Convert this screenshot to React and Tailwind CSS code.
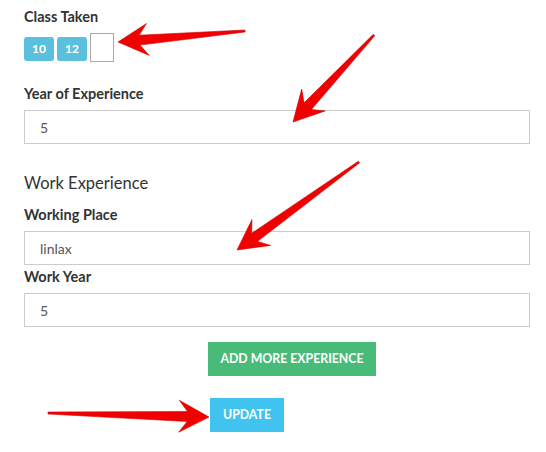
import React from "react";

function arrowPoints(T, P, h = 30, W = 16, w = 5, t = 1) {
  const dx = P[0] - T[0];
  const dy = P[1] - T[1];
  const len = Math.hypot(dx, dy);
  const d = [dx / len, dy / len];
  const n = [-d[1], d[0]];
  const at = (k, m) => [P[0] - d[0] * k + n[0] * m, P[1] - d[1] * k + n[1] * m];
  const pts = [
    [T[0] + n[0] * t, T[1] + n[1] * t],
    at(h * 0.72, w),
    at(h, W),
    P,
    at(h, -W),
    at(h * 0.72, -w),
    [T[0] - n[0] * t, T[1] - n[1] * t],
  ];
  return pts.map((p) => p.map((v) => v.toFixed(1)).join(",")).join(" ");
}

const arrows = [
  { T: [245, 31], P: [118, 42] },
  { T: [374, 35], P: [293, 122] },
  { T: [359, 162], P: [237, 250] },
  { T: [48, 413], P: [209, 417] },
];

function Label({ children, className = "" }) {
  return (
    <div className={`text-[14.5px] leading-[20px] font-bold text-[#333] ${className}`}>
      {children}
    </div>
  );
}

function Input({ value, className = "" }) {
  return (
    <div
      className={`h-[34px] border border-[#cccccc] bg-white flex items-center px-[15px] text-[14px] text-[#555] ${className}`}
    >
      {value}
    </div>
  );
}

export default function App() {
  return (
    <div
      className="relative w-[546px] h-[452px] bg-white overflow-hidden"
      style={{ fontFamily: "Lato, 'Open Sans', sans-serif" }}
    >
      <div className="flex flex-col pl-[24px] pr-[16px] pt-[7px]">
        <Label>Class Taken</Label>
        <div className="flex items-start gap-[3px] mt-[6px]">
          <span className="mt-[4px] w-[30px] h-[24px] rounded-[3px] bg-[#5bc0de] text-white text-[12px] font-bold flex items-center justify-center">
            10
          </span>
          <span className="mt-[4px] w-[30px] h-[24px] rounded-[3px] bg-[#5bc0de] text-white text-[12px] font-bold flex items-center justify-center">
            12
          </span>
          <span className="w-[24px] h-[29px] border border-[#aaaaaa] bg-white" />
        </div>

        <Label className="mt-[22px]">Year of Experience</Label>
        <Input value="5" className="mt-[6px]" />

        <div className="mt-[27px] text-[16.5px] leading-[24px] text-[#333]">Work Experience</div>

        <Label className="mt-[10px]">Working Place</Label>
        <Input value="linlax" className="mt-[6px]" />

        <Label className="mt-[2px]">Work Year</Label>
        <Input value="5" className="mt-[6px]" />

        <div className="mt-[15px] ml-[184px] w-[168px] h-[34px] bg-[#48bb78] text-white text-[12.3px] font-bold flex items-center justify-center">
          ADD MORE EXPERIENCE
        </div>
        <div className="mt-[22px] ml-[186px] w-[74px] h-[34px] bg-[#40c3ee] text-white text-[12.3px] font-bold flex items-center justify-center">
          UPDATE
        </div>
      </div>

      <svg className="absolute inset-0 pointer-events-none" width="546" height="452" viewBox="0 0 546 452">
        {arrows.map((a, i) => (
          <polygon key={i} points={arrowPoints(a.T, a.P)} fill="#f00000" stroke="#d00000" strokeWidth="0.6" strokeLinejoin="round" />
        ))}
      </svg>
    </div>
  );
}
